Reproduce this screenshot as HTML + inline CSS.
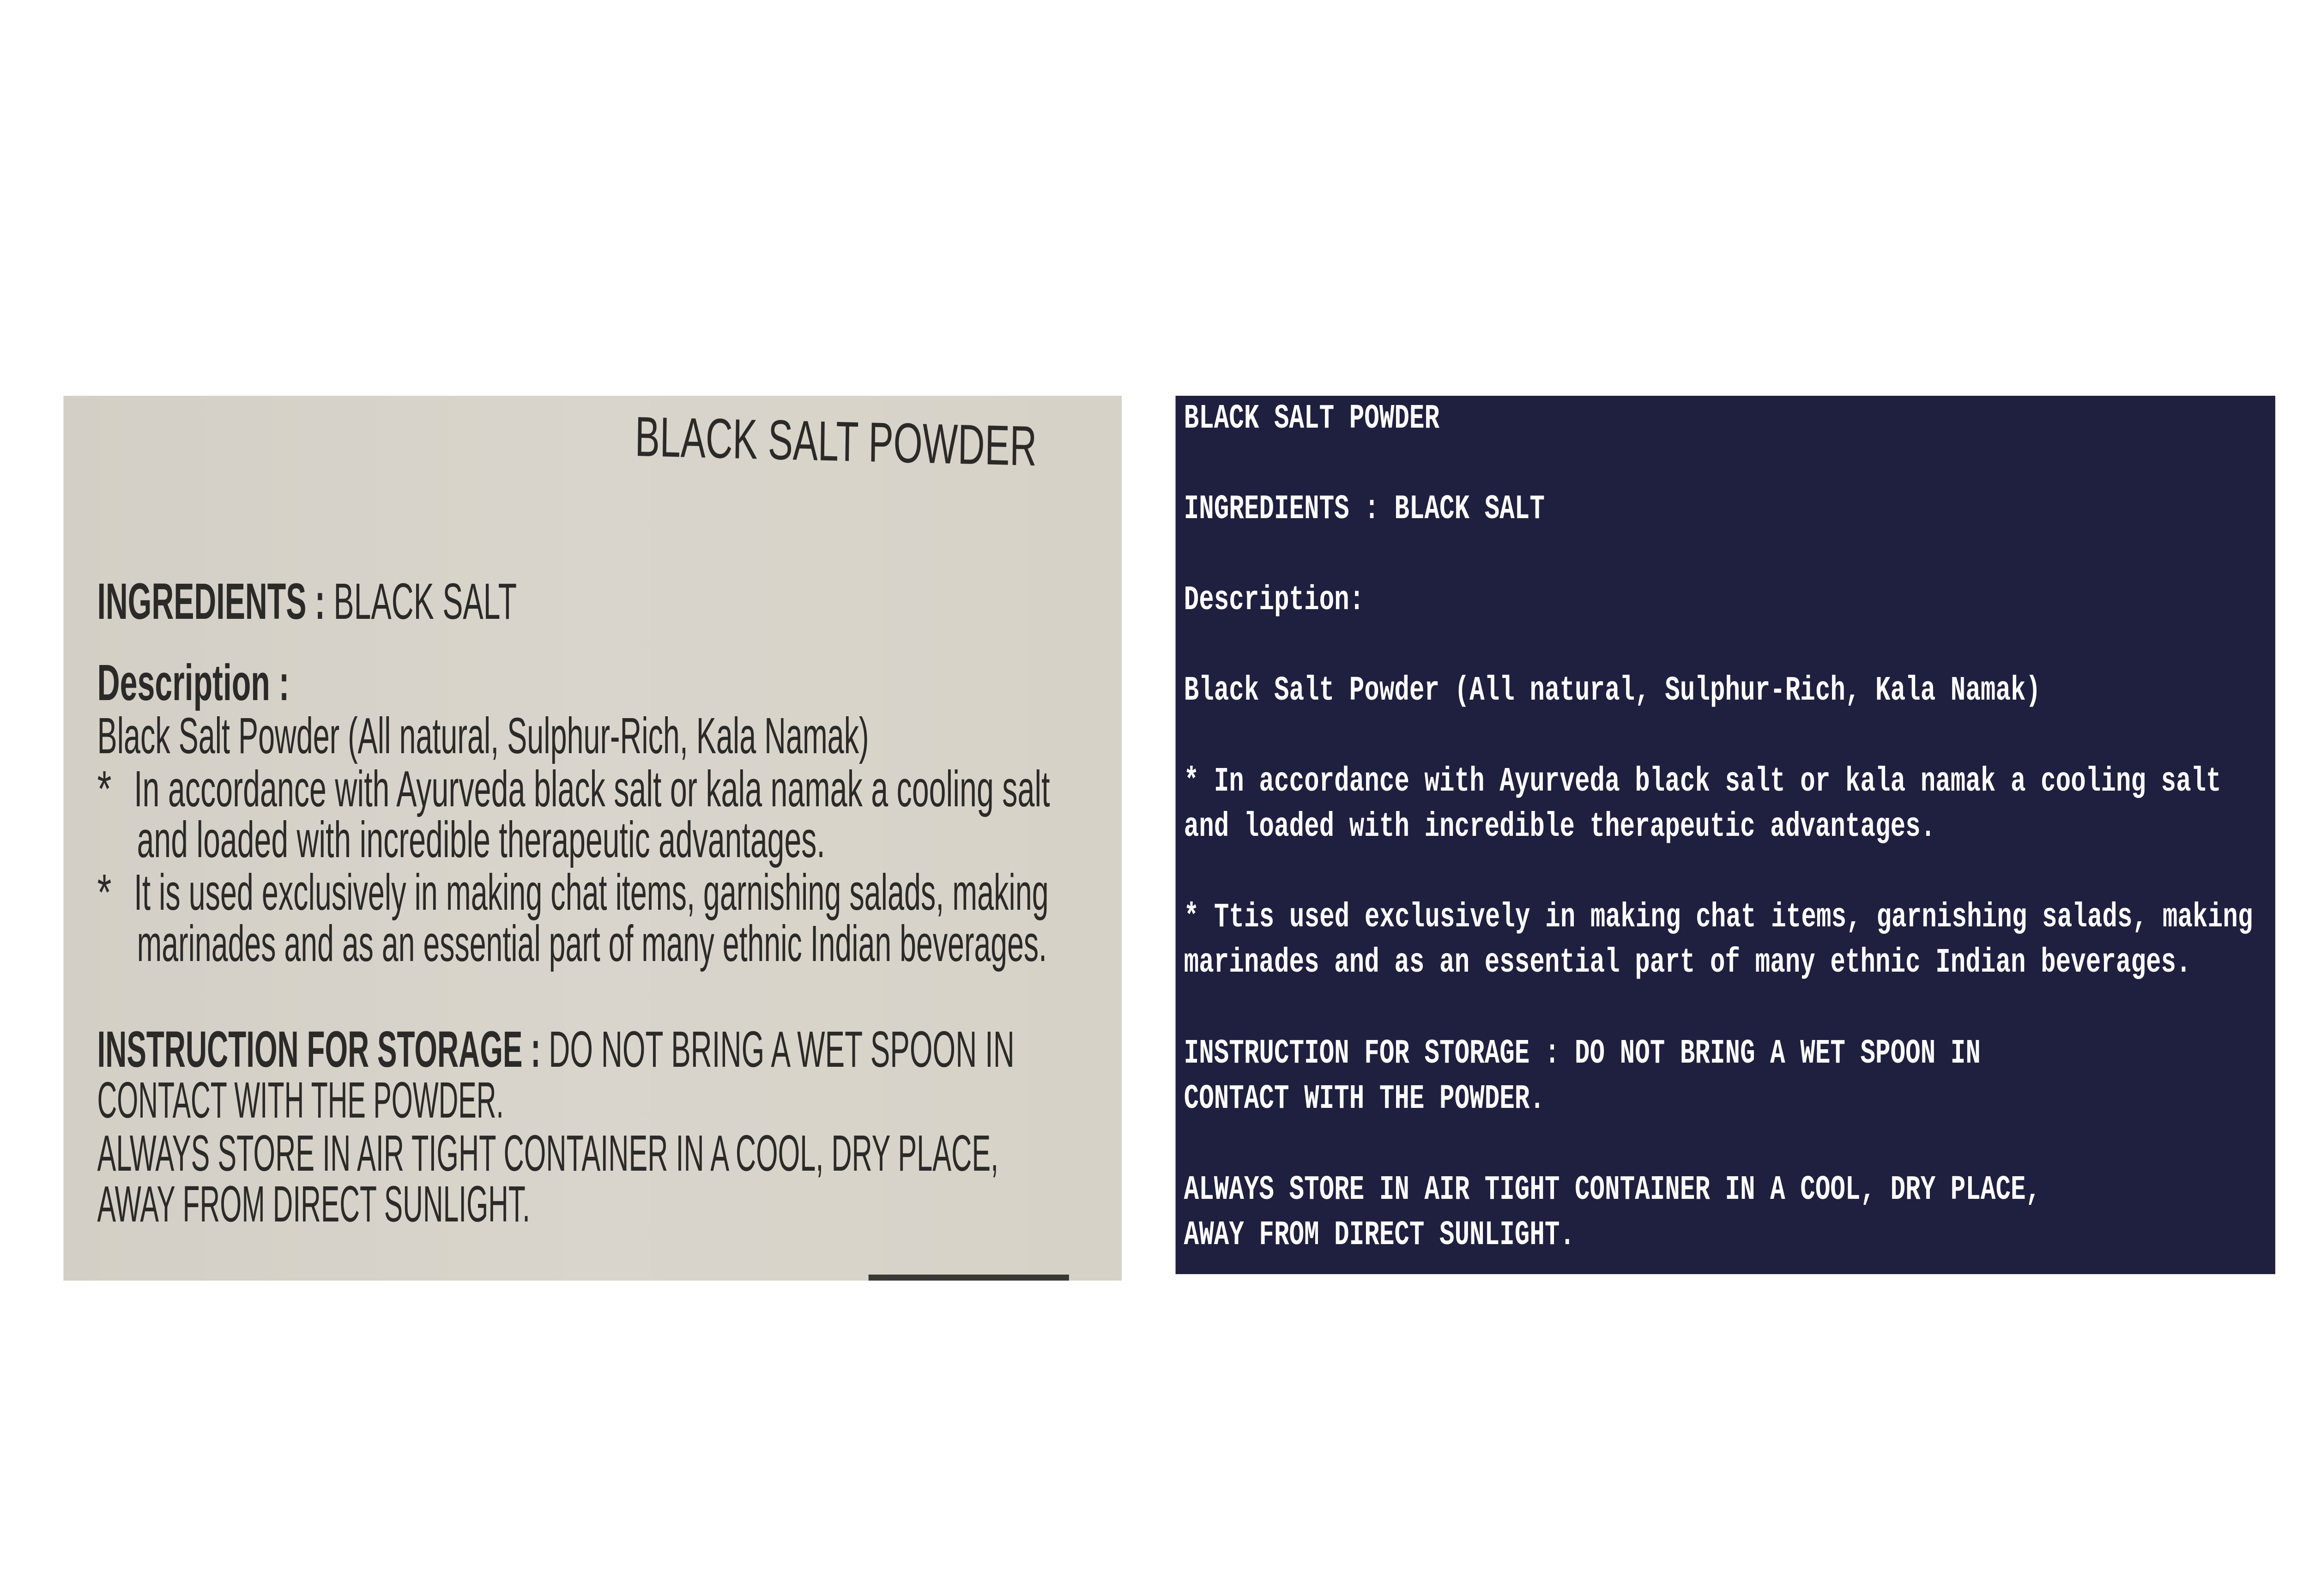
<!DOCTYPE html>
<html><head><meta charset="utf-8"><style>
html,body{margin:0;padding:0;width:100%;height:100%;overflow:hidden;background:#fff;}
svg{display:block;width:100vw;height:100vh;}
</style></head><body>
<svg viewBox="0 0 6912 3456" preserveAspectRatio="none" xmlns="http://www.w3.org/2000/svg">
<defs><linearGradient id="g" x1="0" x2="1" y1="0" y2="0"><stop offset="0" stop-color="#d3cfc6"/><stop offset="0.5" stop-color="#d9d5cc"/><stop offset="1" stop-color="#d6d2c8"/></linearGradient></defs>
<rect x="0" y="0" width="6912" height="3456" fill="#fff"/>
<rect x="190" y="857" width="3168" height="1916" fill="url(#g)"/>
<rect x="2600" y="2760" width="600" height="13" fill="#3a3835"/>
<g font-family="Liberation Sans, sans-serif" fill="#2b2a28">
<text x="1900" y="987" font-size="122" textLength="1203" lengthAdjust="spacingAndGlyphs" transform="rotate(1 1900 987)">BLACK SALT POWDER</text>
<text x="291" y="1340" font-size="110" textLength="1256" lengthAdjust="spacingAndGlyphs"><tspan font-weight="bold">INGREDIENTS : </tspan>BLACK SALT</text>
<text x="291" y="1516" font-size="110" font-weight="bold" textLength="575" lengthAdjust="spacingAndGlyphs">Description :</text>
<text x="291" y="1631" font-size="110" textLength="2310" lengthAdjust="spacingAndGlyphs">Black Salt Powder (All natural, Sulphur-Rich, Kala Namak)</text>
<text x="291" y="1746" font-size="110">*</text>
<text x="401" y="1746" font-size="110" textLength="2742" lengthAdjust="spacingAndGlyphs">In accordance with Ayurveda black salt or kala namak a cooling salt</text>
<text x="410" y="1856" font-size="110" textLength="2060" lengthAdjust="spacingAndGlyphs">and loaded with incredible therapeutic advantages.</text>
<text x="291" y="1970" font-size="110">*</text>
<text x="401" y="1970" font-size="110" textLength="2738" lengthAdjust="spacingAndGlyphs">It is used exclusively in making chat items, garnishing salads, making</text>
<text x="410" y="2081" font-size="110" textLength="2724" lengthAdjust="spacingAndGlyphs">marinades and as an essential part of many ethnic Indian beverages.</text>
<text x="291" y="2310" font-size="110" textLength="2746" lengthAdjust="spacingAndGlyphs"><tspan font-weight="bold">INSTRUCTION  FOR  STORAGE : </tspan>DO NOT BRING A WET SPOON IN</text>
<text x="291" y="2420" font-size="110" textLength="1217" lengthAdjust="spacingAndGlyphs">CONTACT WITH THE POWDER.</text>
<text x="291" y="2535" font-size="110" textLength="2698" lengthAdjust="spacingAndGlyphs">ALWAYS STORE IN AIR TIGHT CONTAINER IN A COOL, DRY PLACE,</text>
<text x="291" y="2645" font-size="110" textLength="1296" lengthAdjust="spacingAndGlyphs">AWAY FROM DIRECT SUNLIGHT.</text>
</g>
<rect x="3519" y="857" width="3292" height="1902" fill="#1f1f3f"/>
<g font-family="Liberation Mono, monospace" font-weight="bold" font-size="74" fill="#fff">
<text x="3544" y="926" textLength="765" lengthAdjust="spacingAndGlyphs">BLACK SALT POWDER</text>
<text x="3544" y="1122" textLength="1080" lengthAdjust="spacingAndGlyphs">INGREDIENTS : BLACK SALT</text>
<text x="3544" y="1319" textLength="540" lengthAdjust="spacingAndGlyphs">Description:</text>
<text x="3544" y="1515" textLength="2565" lengthAdjust="spacingAndGlyphs">Black Salt Powder (All natural, Sulphur-Rich, Kala Namak)</text>
<text x="3544" y="1712" textLength="3105" lengthAdjust="spacingAndGlyphs">* In accordance with Ayurveda black salt or kala namak a cooling salt</text>
<text x="3544" y="1810" textLength="2250" lengthAdjust="spacingAndGlyphs">and loaded with incredible therapeutic advantages.</text>
<text x="3544" y="2006" textLength="3200" lengthAdjust="spacingAndGlyphs">* Ttis used exclusively in making chat items, garnishing salads, making</text>
<text x="3544" y="2104" textLength="3015" lengthAdjust="spacingAndGlyphs">marinades and as an essential part of many ethnic Indian beverages.</text>
<text x="3544" y="2301" textLength="2385" lengthAdjust="spacingAndGlyphs">INSTRUCTION FOR STORAGE : DO NOT BRING A WET SPOON IN</text>
<text x="3544" y="2399" textLength="1080" lengthAdjust="spacingAndGlyphs">CONTACT WITH THE POWDER.</text>
<text x="3544" y="2596" textLength="2565" lengthAdjust="spacingAndGlyphs">ALWAYS STORE IN AIR TIGHT CONTAINER IN A COOL, DRY PLACE,</text>
<text x="3544" y="2694" textLength="1170" lengthAdjust="spacingAndGlyphs">AWAY FROM DIRECT SUNLIGHT.</text>
</g>
</svg>
</body></html>
